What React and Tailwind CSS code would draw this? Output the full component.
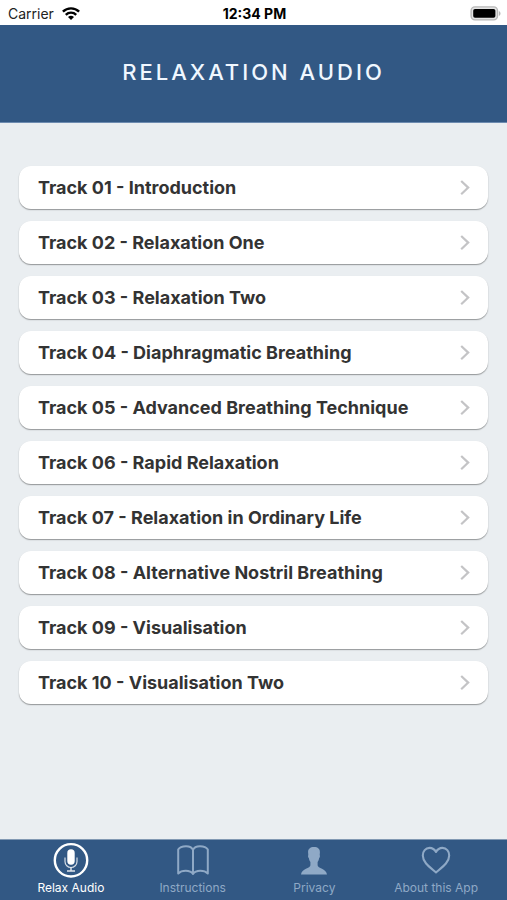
import React, { useState } from "react";

const tracks = [
  "Introduction",
  "Relaxation One",
  "Relaxation Two",
  "Diaphragmatic Breathing",
  "Advanced Breathing Technique",
  "Rapid Relaxation",
  "Relaxation in Ordinary Life",
  "Alternative Nostril Breathing",
  "Visualisation",
  "Visualisation Two",
];

const WifiIcon = () => (
  <svg viewBox="0 0 18 14" className="w-[18px] h-[14px]" fill="none" stroke="#000" strokeWidth="2.4" aria-hidden="true">
    <path d="M.9 4.7a11.6 11.6 0 0 1 16.2 0" />
    <path d="M3.8 7.8a7.4 7.4 0 0 1 10.4 0" />
    <path d="M9 13.1 6 10.1a4.3 4.3 0 0 1 6 0z" fill="#000" stroke="none" />
  </svg>
);

const BatteryIcon = () => (
  <svg viewBox="0 0 31 15" className="w-[31px] h-[15px]" aria-hidden="true">
    <rect x="1.1" y=".9" width="26.4" height="13" rx="3.8" fill="#e4e4e4" stroke="#b8b8b8" strokeWidth="1.4" />
    <rect x="3.2" y="3" width="22.2" height="8.8" rx="1.8" fill="#000" />
    <path d="M28.9 5v5c1-.4 1.6-1.4 1.6-2.5s-.6-2.1-1.6-2.5z" fill="#b8b8b8" />
  </svg>
);

const ChevronIcon = () => (
  <svg viewBox="0 0 10 16" className="w-[10px] h-[16px]" fill="none" stroke="#c4c4c6" strokeWidth="2.2" aria-hidden="true">
    <path d="M1.2 1 8.2 7.6l-7 6.7" />
  </svg>
);

const MicIcon = () => (
  <svg viewBox="0 0 36 36" className="w-[36px] h-[36px]" fill="none" stroke="currentColor" aria-hidden="true">
    <circle cx="18" cy="18.3" r="16.2" strokeWidth="2.4" />
    <rect x="14.3" y="7.2" width="7.4" height="15.6" rx="3.7" fill="currentColor" stroke="none" />
    <path d="M12 15.5v4a6 6 0 0 0 12 0v-4" strokeWidth="1.2" opacity=".8" />
    <path d="M18 25.5v3.2M14 29.1h8" strokeWidth="1.5" opacity=".85" />
  </svg>
);

const BookIcon = () => (
  <svg viewBox="0 0 36 36" className="w-[36px] h-[36px]" fill="none" stroke="currentColor" strokeWidth="2" strokeLinejoin="round" aria-hidden="true">
    <path d="M18 8C17 5.4 14.2 4.2 11 4.2C7.500 4.200 4.600 5.100 3.200 7.600V31.500C5 29.600 7.500 28.700 10.700 28.700C14 28.700 16.600 29.700 18 32C19.400 29.700 22 28.700 25.300 28.700C28.500 28.700 31 29.600 32.800 31.500V7.600C31.400 5.100 28.500 4.200 25 4.200C21.800 4.200 19 5.400 18 8z" />
    <path d="M18 8v24" />
  </svg>
);

const PersonIcon = () => (
  <svg viewBox="0 0 36 36" className="w-[36px] h-[36px]" fill="currentColor" aria-hidden="true">
    <path d="M18 5c-3.9 0-6.1 1.9-5.9 5.4l.2 2.6c-.5.8-.2 2.6.6 3.2.3 1.7.8 2.9 1.5 3.8v3.3c0 3.1-8.7 3.3-9.4 9.2h26c-.7-5.9-9.4-6.1-9.4-9.2V20c.7-.9 1.2-2.1 1.5-3.8.8-.6 1.1-2.4.6-3.2l.2-2.6C24.1 6.9 21.9 5 18 5z" />
  </svg>
);

const HeartIcon = () => (
  <svg viewBox="0 0 36 36" className="w-[36px] h-[36px]" fill="none" stroke="currentColor" strokeWidth="2.1" strokeLinejoin="round" aria-hidden="true">
    <path d="M18 10C16.5 7.3 14.2 5.9 11.6 5.9C7.5 5.9 4.8 9.2 4.8 13.4C4.8 20.5 12 25.3 18 30.5C24 25.3 31.2 20.5 31.2 13.4C31.2 9.2 28.5 5.9 24.4 5.9C21.8 5.9 19.5 7.3 18 10z" />
  </svg>
);

const tabs = [
  { name: "Relax Audio", Icon: MicIcon },
  { name: "Instructions", Icon: BookIcon },
  { name: "Privacy", Icon: PersonIcon },
  { name: "About this App", Icon: HeartIcon },
];

const StatusBar = () => (
  <div className="grid grid-cols-3 items-center bg-white h-[25px] pl-2 pr-1.5 pt-0.5 text-sm text-black">
    <div className="flex items-center gap-2 text-[#222222]">
      <span>Carrier</span>
      <WifiIcon />
    </div>
    <span className="text-center font-bold">12:34 PM</span>
    <div className="flex justify-end">
      <BatteryIcon />
    </div>
  </div>
);

const TrackRow = ({ number, title }) => (
  <li>
    <button
      type="button"
      className="flex items-center justify-between w-full h-[43px] pl-[19px] pr-[18px] rounded-xl bg-white shadow-[0_1px_1px_rgba(0,0,0,0.3),0_1px_2px_rgba(0,0,0,0.1)] text-left text-lg font-bold text-[#333333] cursor-pointer"
    >
      <span>
        Track {String(number).padStart(2, "0")} - {title}
      </span>
      <ChevronIcon />
    </button>
  </li>
);

const App = () => {
  const [activeTab, setActiveTab] = useState("Relax Audio");

  return (
    <div className="flex flex-col min-h-screen bg-[#eaeef1] font-['Inter',sans-serif]">
      <StatusBar />

      {/* Header */}
      <header className="bg-[#325884] pt-[33px] pb-[35px] border-b border-[#6d8bb0]">
        <h1 className="text-center text-[22px] leading-[29px] font-medium tracking-[3px] text-[#f0f7ff]">
          RELAXATION AUDIO
        </h1>
      </header>

      {/* Track list */}
      <main className="flex-1 px-[19px] pt-[43px] pb-6">
        <ul className="flex flex-col gap-3">
          {tracks.map((title, i) => (
            <TrackRow key={title} number={i + 1} title={title} />
          ))}
        </ul>
      </main>

      {/* Tab bar */}
      <nav className="sticky bottom-0 grid grid-cols-4 px-2.5 pt-0.5 pb-1 bg-[#325884] border-t border-[#8299b3]">
        {tabs.map(({ name, Icon }) => (
          <button
            key={name}
            type="button"
            onClick={() => setActiveTab(name)}
            className={`flex flex-col items-center gap-0.5 text-xs whitespace-nowrap cursor-pointer ${
              activeTab === name ? "text-white" : "text-[#8fa9c6]"
            }`}
          >
            <Icon />
            <span>{name}</span>
          </button>
        ))}
      </nav>
    </div>
  );
};

export default App;
